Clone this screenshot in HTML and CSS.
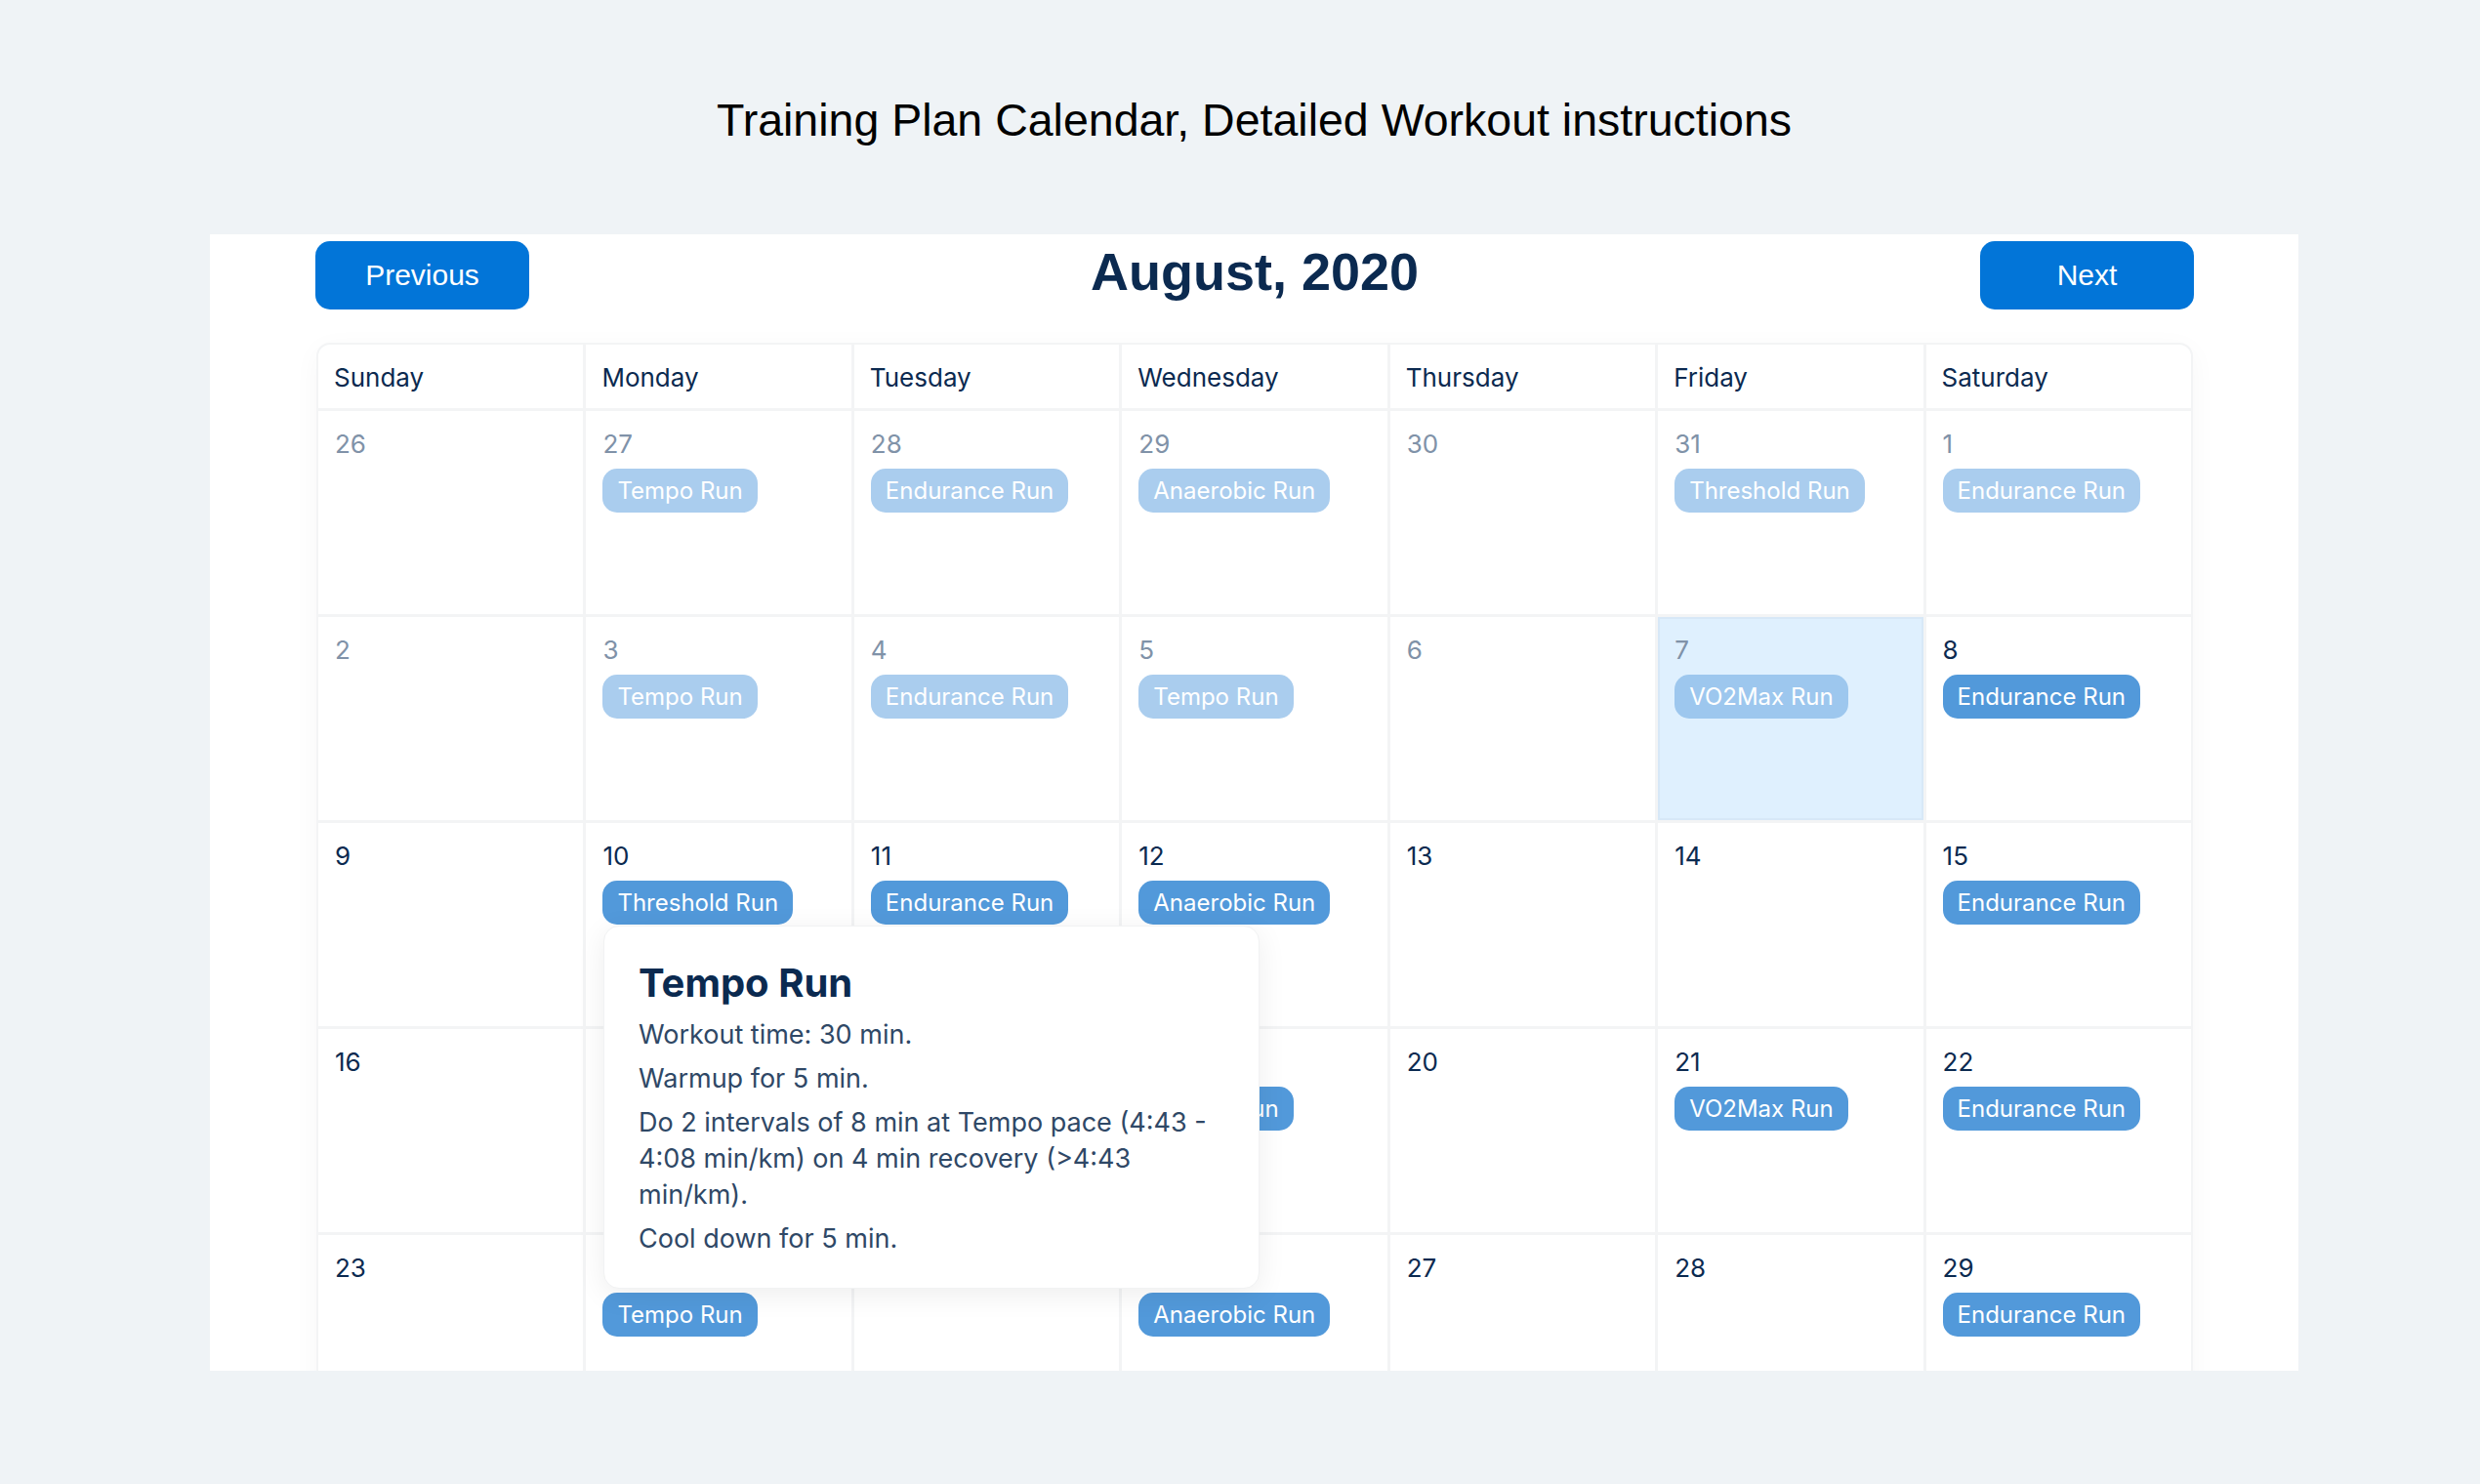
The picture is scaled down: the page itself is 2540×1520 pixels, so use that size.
FILE: index.html
```html
<!DOCTYPE html>
<html lang="en">
<head>
<meta charset="utf-8">
<title>Training Plan Calendar</title>
<link rel="stylesheet" href="styles.css">
</head>
<body>
<div class="page">
  <h1 class="page-title">Training Plan Calendar, Detailed Workout instructions</h1>
  <div class="panel">
    <div class="toolbar">
      <button class="nav-btn">Previous</button>
      <h2 class="month">August, 2020</h2>
      <button class="nav-btn">Next</button>
    </div>
    <div class="calendar">
      <div class="grid">
        <div class="head">Sunday</div>
        <div class="head">Monday</div>
        <div class="head">Tuesday</div>
        <div class="head">Wednesday</div>
        <div class="head">Thursday</div>
        <div class="head">Friday</div>
        <div class="head">Saturday</div>

        <div class="day past"><div class="num">26</div></div>
        <div class="day past"><div class="num">27</div><span class="badge">Tempo Run</span></div>
        <div class="day past"><div class="num">28</div><span class="badge">Endurance Run</span></div>
        <div class="day past"><div class="num">29</div><span class="badge">Anaerobic Run</span></div>
        <div class="day past"><div class="num">30</div></div>
        <div class="day past"><div class="num">31</div><span class="badge">Threshold Run</span></div>
        <div class="day past"><div class="num">1</div><span class="badge">Endurance Run</span></div>

        <div class="day past"><div class="num">2</div></div>
        <div class="day past"><div class="num">3</div><span class="badge">Tempo Run</span></div>
        <div class="day past"><div class="num">4</div><span class="badge">Endurance Run</span></div>
        <div class="day past"><div class="num">5</div><span class="badge">Tempo Run</span></div>
        <div class="day past"><div class="num">6</div></div>
        <div class="day past today"><div class="num">7</div><span class="badge">VO2Max Run</span></div>
        <div class="day"><div class="num">8</div><span class="badge">Endurance Run</span></div>

        <div class="day"><div class="num">9</div></div>
        <div class="day"><div class="num">10</div><span class="badge">Threshold Run</span></div>
        <div class="day"><div class="num">11</div><span class="badge">Endurance Run</span></div>
        <div class="day"><div class="num">12</div><span class="badge">Anaerobic Run</span></div>
        <div class="day"><div class="num">13</div></div>
        <div class="day"><div class="num">14</div></div>
        <div class="day"><div class="num">15</div><span class="badge">Endurance Run</span></div>

        <div class="day"><div class="num">16</div></div>
        <div class="day"><div class="num">17</div></div>
        <div class="day"><div class="num">18</div></div>
        <div class="day"><div class="num">19</div><span class="badge">Tempo Run</span></div>
        <div class="day"><div class="num">20</div></div>
        <div class="day"><div class="num">21</div><span class="badge">VO2Max Run</span></div>
        <div class="day"><div class="num">22</div><span class="badge">Endurance Run</span></div>

        <div class="day"><div class="num">23</div></div>
        <div class="day"><div class="num">24</div><span class="badge">Tempo Run</span></div>
        <div class="day"><div class="num">25</div></div>
        <div class="day"><div class="num">26</div><span class="badge">Anaerobic Run</span></div>
        <div class="day"><div class="num">27</div></div>
        <div class="day"><div class="num">28</div></div>
        <div class="day"><div class="num">29</div><span class="badge">Endurance Run</span></div>
      </div>
      <div class="tooltip">
        <h3 class="tip-title">Tempo Run</h3>
        <p class="tip-text">Workout time: 30 min.</p>
        <p class="tip-text">Warmup for 5 min.</p>
        <p class="tip-text">Do 2 intervals of 8 min at Tempo pace (4:43 - 4:08 min/km) on 4 min recovery (&gt;4:43 min/km).</p>
        <p class="tip-text">Cool down for 5 min.</p>
      </div>
    </div>
  </div>
</div>
</body>
</html>
```
FILE: styles.css
```css
html, body {
  margin: 0;
  padding: 0;
}
body {
  background: #eff3f6;
  width: 2540px;
  height: 1520px;
  overflow: hidden;
}
.page {
  width: 2139px;
  margin-left: 215px;
}
.page-title {
  margin: 0;
  padding-top: 97px;
  height: 52px;
  line-height: 52px;
  font-family: "Liberation Sans", Arial, sans-serif;
  font-weight: 400;
  font-size: 46.5px;
  color: #000;
  text-align: center;
  margin-bottom: 91px;
}
.panel {
  background: #fff;
  height: 1164px;
  box-sizing: border-box;
  padding: 7px 107px 0 108px;
  overflow: hidden;
}
.toolbar {
  display: flex;
  justify-content: space-between;
  align-items: flex-start;
  height: 70px;
}
.nav-btn {
  width: 219px;
  height: 70px;
  border: 0;
  border-radius: 15px;
  background: #0275d8;
  color: #fff;
  font-family: "Liberation Sans", Arial, sans-serif;
  font-size: 30px;
  padding: 0;
}
.month {
  margin: 0;
  font-family: "Liberation Sans", Arial, sans-serif;
  font-weight: 700;
  font-size: 54px;
  line-height: 62px;
  color: #0b2a50;
}
.calendar {
  position: relative;
  margin: 34px 1px 0;
}
.grid {
  display: grid;
  grid-template-columns: repeat(7, 1fr);
  grid-template-rows: 65px repeat(5, 208px);
  gap: 3px;
  background: #f3f4f5;
  border: 2px solid #f3f4f5;
  border-radius: 14px;
  overflow: hidden;
  box-shadow: 0 6px 28px rgba(0, 0, 0, 0.035);
  font-family: Inter, "Noto Sans", sans-serif;
}
.head {
  background: #fff;
  box-sizing: border-box;
  padding: 18px 16px 0;
  font-size: 26px;
  line-height: 31px;
  color: #0b2a50;
}
.day {
  background: #fff;
  box-sizing: border-box;
  padding: 18px 17px 0;
}
.num {
  font-size: 26px;
  line-height: 31px;
  color: #0b2a50;
}
.badge {
  display: inline-block;
  margin-top: 10px;
  padding: 8px 15px;
  border-radius: 15px;
  background: #5299da;
  color: #fff;
  font-size: 24px;
  line-height: 29px;
}
.past .num {
  color: #8092a8;
}
.past .badge {
  background: #aacdee;
}
.today {
  background: #dff0fe;
  box-shadow: inset 0 0 0 2px #d7e8f7;
}
.today .badge {
  background: #9dc7ee;
}
.tooltip {
  position: absolute;
  left: 294px;
  top: 597px;
  width: 672px;
  height: 372px;
  box-sizing: border-box;
  padding: 34px 34px 0 35px;
  background: #fff;
  border: 1px solid #f1f2f3;
  border-radius: 16px;
  box-shadow: 0 6px 30px rgba(0, 0, 0, 0.07);
  font-family: Inter, "Noto Sans", sans-serif;
}
.tip-title {
  margin: 0 0 10px;
  font-size: 40px;
  line-height: 48px;
  font-weight: 700;
  color: #0b2a50;
}
.tip-text {
  margin: 0 0 8px;
  font-size: 27px;
  line-height: 37px;
  color: #2f4866;
}
```
